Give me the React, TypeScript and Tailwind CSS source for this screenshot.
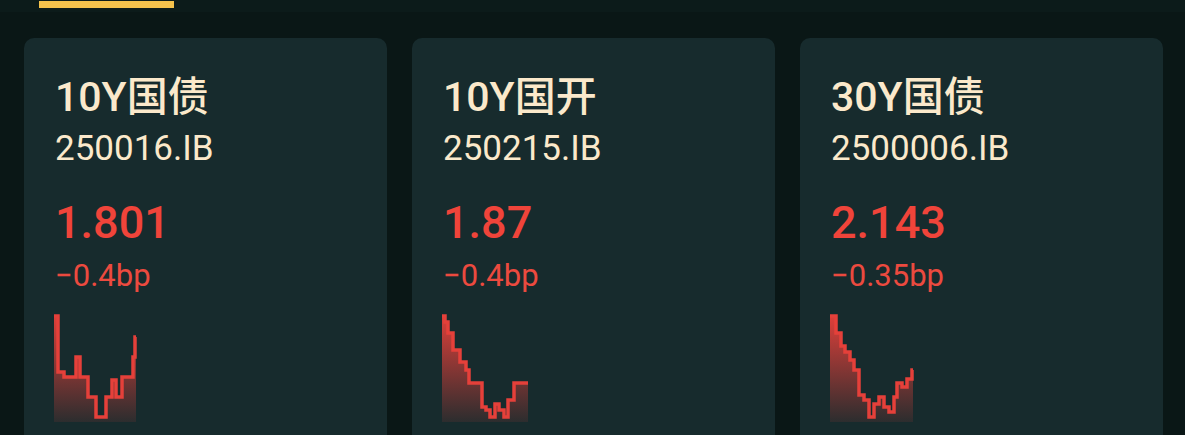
import React from "react";

type Bond = {
  name: string;
  code: string;
  yieldValue: string;
  change: string;
  width: number;
  steps: [number, number][];
};

const bonds: Bond[] = [
  {
    name: "10Y国债",
    code: "250016.IB",
    yieldValue: "1.801",
    change: "−0.4bp",
    width: 82,
    steps: [
      [0, 0], [4, 56], [10, 61], [22, 41], [26, 61], [34, 81], [42, 101],
      [52, 81], [58, 64], [62, 81], [68, 61], [79, 41], [81, 21],
    ],
  },
  {
    name: "10Y国开",
    code: "250215.IB",
    yieldValue: "1.87",
    change: "−0.4bp",
    width: 86,
    steps: [
      [0, 0], [3, 6], [6, 17], [11, 34], [18, 46], [24, 54], [27, 67],
      [38, 67], [40, 91], [44, 94], [48, 101], [53, 88], [57, 94], [62, 101],
      [66, 84], [72, 67], [85, 67],
    ],
  },
  {
    name: "30Y国债",
    code: "2500006.IB",
    yieldValue: "2.143",
    change: "−0.35bp",
    width: 84,
    steps: [
      [0, 0], [6, 17], [11, 30], [15, 36], [20, 44], [24, 54], [29, 79],
      [34, 84], [39, 101], [44, 88], [49, 81], [54, 91], [59, 96], [64, 81],
      [67, 67], [72, 71], [77, 63], [82, 54],
    ],
  },
];

const StepChart = ({ steps, width, id }: { steps: [number, number][]; width: number; id: string }) => {
  const pad = 2;
  const end = steps[steps.length - 1][0] + 1;
  let line = "";
  steps.forEach(([x, y], i) => {
    const px = x + pad;
    const py = y + pad;
    if (i === 0) line += `M${px} ${py}`;
    else line += ` H${px} V${py}`;
  });
  line += ` H${end + pad}`;
  const area = `${line} V${108} H${pad} Z`;

  return (
    <svg width={width + pad * 2} height={108} viewBox={`0 0 ${width + pad * 2} 108`} className="block">
      <defs>
        <linearGradient id={id} x1="0" y1="0" x2="0" y2="1">
          <stop offset="0%" stopColor="#e8403a" stopOpacity="0.95" />
          <stop offset="100%" stopColor="#e8403a" stopOpacity="0.1" />
        </linearGradient>
      </defs>
      <path d={area} fill={`url(#${id})`} />
      <path d={line} fill="none" stroke="#e5403a" strokeWidth="3.5" strokeLinejoin="miter" />
    </svg>
  );
};

const BondCard = ({ bond, idx }: { bond: Bond; idx: number }) => (
  <div className="w-[363px] h-[420px] shrink-0 rounded-[10px] bg-[#172b2d] pl-[31px] pt-[35px]">
    <div className="text-[41px] leading-[48px] font-medium text-[#fbe9cb]">{bond.name}</div>
    <div className="mt-[8px] text-[35px] leading-[40px] text-[#fbe9cb]">{bond.code}</div>
    <div className="mt-[27px] text-[45px] leading-[54px] font-medium text-[#f0443a]">{bond.yieldValue}</div>
    <div className="mt-[8px] text-[31px] leading-[35px] text-[#ec4a3f]">{bond.change}</div>
    <div className="mt-[21px] -ml-[3px]">
      <StepChart steps={bond.steps} width={bond.width} id={`grad-${idx}`} />
    </div>
  </div>
);

export default function App() {
  return (
    <div
      className="w-[1185px] h-[435px] overflow-hidden bg-[#0a1716]"
      style={{ fontFamily: 'Roboto, "Noto Sans CJK SC", sans-serif' }}
    >
      <div className="h-[12px] bg-[#0c1b1a] pl-[39px]">
        <div className="pt-[1px]">
          <div className="w-[135px] h-[7px] bg-[#f5c24c]" />
        </div>
      </div>
      <div className="flex gap-[25px] pl-[24px] pt-[26px]">
        {bonds.map((b, i) => (
          <BondCard key={b.code} bond={b} idx={i} />
        ))}
      </div>
    </div>
  );
}
